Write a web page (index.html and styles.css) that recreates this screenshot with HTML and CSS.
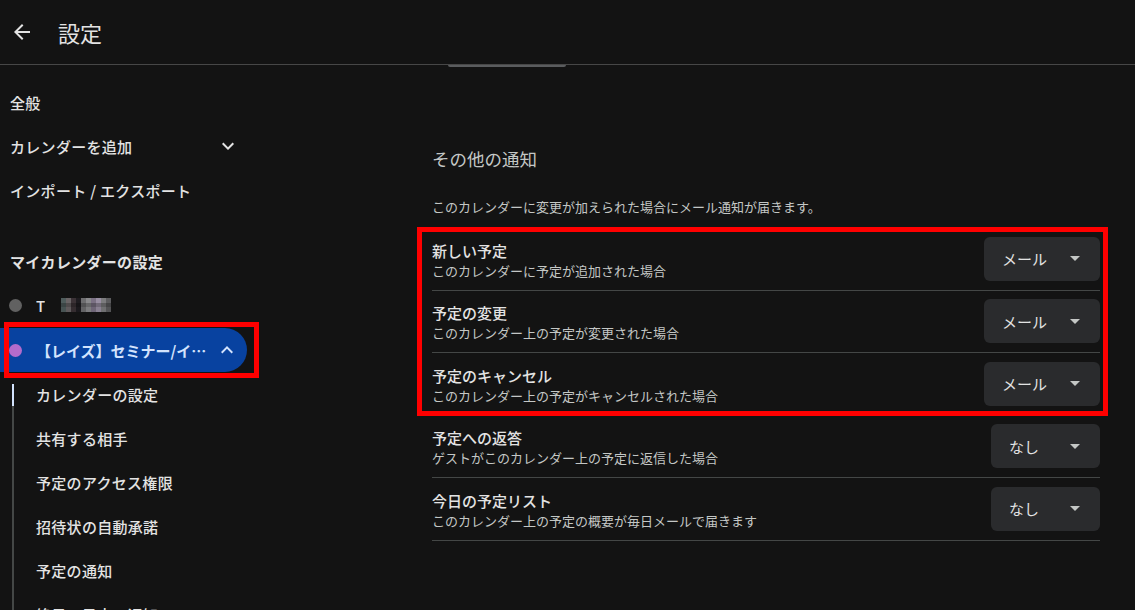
FILE: index.html
```html
<!DOCTYPE html>
<html lang="ja">
<head>
  <meta charset="UTF-8" />
  <meta name="viewport" content="width=device-width, initial-scale=1.0"/>
  <title>設定</title>
  <link rel="stylesheet" href="styles.css">
</head>
<body>

  <!-- Header -->
  <header class="topbar">
    <svg class="back" viewBox="0 0 24 24" width="24" height="24"><path fill="#e3e3e3" d="M20 11H7.83l5.59-5.59L12 4l-8 8 8 8 1.41-1.41L7.83 13H20v-2z"/></svg>
    <h1>設定</h1>
  </header>

  <div class="layout">
    <!-- Sidebar -->
    <aside class="sidebar">
      <a class="nav-item" href="#">全般</a>
      <a class="nav-item" href="#">カレンダーを追加
        <svg class="chev" viewBox="0 0 24 24" width="24" height="24"><path fill="#e3e3e3" d="M16.59 8.59L12 13.17 7.41 8.59 6 10l6 6 6-6z"/></svg>
      </a>
      <a class="nav-item" href="#">インポート / エクスポート</a>

      <div class="nav-heading">マイカレンダーの設定</div>

      <div class="cal-item">
        <span class="dot dot-gray"></span>
        <span class="cal-name">T</span>
        <span class="mosaic"></span>
      </div>

      <div class="cal-item active">
        <span class="dot dot-purple"></span>
        <span class="cal-name">【レイズ】セミナー/イベント</span>
        <svg class="chev" viewBox="0 0 24 24" width="24" height="24"><path fill="#d3e3fd" d="M12 8l-6 6 1.41 1.41L12 10.83l4.59 4.58L18 14z"/></svg>
      </div>

      <div class="sub-list">
        <a class="sub-item current" href="#">カレンダーの設定</a>
        <a class="sub-item" href="#">共有する相手</a>
        <a class="sub-item" href="#">予定のアクセス権限</a>
        <a class="sub-item" href="#">招待状の自動承諾</a>
        <a class="sub-item" href="#">予定の通知</a>
        <a class="sub-item" href="#">終日の予定の通知</a>
      </div>
    </aside>

    <!-- Main -->
    <main class="content">
      <div class="scroll-peek"></div>

      <h2 class="section-title">その他の通知</h2>
      <p class="section-desc">このカレンダーに変更が加えられた場合にメール通知が届きます。</p>

      <div class="rows">
        <div class="marked">
          <div class="row">
            <div class="row-text">
              <div class="row-title">新しい予定</div>
              <div class="row-sub">このカレンダーに予定が追加された場合</div>
            </div>
            <div class="select select-mail"><span>メール</span><i class="caret"></i></div>
          </div>
          <div class="row">
            <div class="row-text">
              <div class="row-title">予定の変更</div>
              <div class="row-sub">このカレンダー上の予定が変更された場合</div>
            </div>
            <div class="select select-mail"><span>メール</span><i class="caret"></i></div>
          </div>
          <div class="row">
            <div class="row-text">
              <div class="row-title">予定のキャンセル</div>
              <div class="row-sub">このカレンダー上の予定がキャンセルされた場合</div>
            </div>
            <div class="select select-mail"><span>メール</span><i class="caret"></i></div>
          </div>
        </div>

        <div class="row">
          <div class="row-text">
            <div class="row-title">予定への返答</div>
            <div class="row-sub">ゲストがこのカレンダー上の予定に返信した場合</div>
          </div>
          <div class="select select-none"><span>なし</span><i class="caret"></i></div>
        </div>
        <div class="row">
          <div class="row-text">
            <div class="row-title">今日の予定リスト</div>
            <div class="row-sub">このカレンダー上の予定の概要が毎日メールで届きます</div>
          </div>
          <div class="select select-none"><span>なし</span><i class="caret"></i></div>
        </div>
      </div>
    </main>
  </div>

</body>
</html>
```

FILE: styles.css
```css
* {
  box-sizing: border-box;
}

html, body {
  height: 100%;
}

body {
  margin: 0;
  font-family: "Noto Sans CJK JP", "Noto Sans", sans-serif;
  background: #131313;
  color: #e3e3e3;
  overflow: hidden;
}

a {
  color: inherit;
  text-decoration: none;
}

/* header */
.topbar {
  display: flex;
  align-items: center;
  height: 65px;
  padding-left: 10px;
  border-bottom: 1px solid #474747;
}

.topbar .back {
  display: block;
}

.topbar h1 {
  margin: 0 0 0 24px;
  font-size: 22px;
  font-weight: 400;
  line-height: 28px;
  color: #e3e3e3;
}

.layout {
  display: flex;
}

/* sidebar */
.sidebar {
  width: 256px;
  flex: none;
  padding-top: 15px;
}

.nav-item {
  display: flex;
  align-items: center;
  height: 44px;
  padding: 0 16px 0 10px;
  font-size: 15px;
  font-weight: 500;
  letter-spacing: 0.3px;
}

.nav-item .chev {
  margin-left: auto;
}

.nav-heading {
  display: flex;
  align-items: center;
  height: 44px;
  margin-top: 27px;
  padding-left: 10px;
  font-size: 15px;
  font-weight: 700;
  letter-spacing: 0.3px;
}

.cal-item {
  display: flex;
  align-items: center;
  height: 44px;
  padding: 0 8px 0 9px;
  font-size: 15px;
  font-weight: 500;
}

.dot {
  width: 13px;
  height: 13px;
  border-radius: 50%;
  flex: none;
  margin-right: 14px;
}

.dot-gray {
  background: #616161;
}

.dot-purple {
  background: #b36bcb;
}

.cal-name {
  white-space: nowrap;
  overflow: hidden;
  text-overflow: ellipsis;
}

.mosaic {
  width: 50px;
  height: 14px;
  margin-left: 16px;
  background:
    linear-gradient(180deg, rgba(0,0,0,0) 0 5px, rgba(0,0,0,0.25) 5px 9px, rgba(0,0,0,0.1) 9px),
    linear-gradient(90deg, #4f5c5c 0 5px, #6a6466 5px 10px, #3b3236 10px 15px, #1e1c20 15px 20px,
      #6e6e70 20px 25px, #8a8a8c 25px 30px, #7b7184 30px 35px, #988ea2 35px 40px,
      #7c7c7e 40px 45px, #5c5c5e 45px 50px);
}

.cal-item.active {
  position: relative;
  width: 247px;
  margin-top: 1px;
  background: #0842a0;
  color: #d3e3fd;
  font-weight: 700;
  border-radius: 0 22px 22px 0;
}

.cal-item.active .cal-name {
  width: 172px;
}

.cal-item.active .chev {
  margin-left: auto;
}

/* annotation box */
.cal-item.active::after {
  content: "";
  position: absolute;
  left: 4px;
  right: -12px;
  top: -6px;
  bottom: -6px;
  border: 5px solid #ff0000;
}

.sub-list {
  position: relative;
}

.sub-list::before {
  content: "";
  position: absolute;
  left: 12px;
  top: 12px;
  bottom: 0;
  width: 2px;
  background: #444746;
}

.sub-item {
  position: relative;
  display: flex;
  align-items: center;
  height: 44px;
  padding-left: 36px;
  font-size: 15px;
  font-weight: 500;
  letter-spacing: 0.3px;
}

.sub-item.current::before {
  content: "";
  position: absolute;
  left: 12px;
  top: 12px;
  width: 2px;
  height: 22px;
  background: #d3e3fd;
}

/* main */
.content {
  width: 844px;
  padding-left: 176px;
}

.scroll-peek {
  width: 118px;
  height: 2px;
  margin-left: 16px;
  background: #5a5c5e;
  border-radius: 0 0 6px 6px;
}

.section-title {
  margin: 80px 0 0;
  font-size: 17.5px;
  font-weight: 400;
  line-height: 24px;
  color: #c4c7c5;
}

.section-desc {
  margin: 26px 0 0;
  font-size: 13px;
  line-height: 20px;
  color: #c4c7c5;
}

.rows {
  margin-top: 11px;
}

.marked {
  position: relative;
}

.marked::after {
  content: "";
  position: absolute;
  left: -15px;
  right: -8px;
  top: -1px;
  bottom: 0;
  border: 5px solid #ff0000;
}

.row {
  display: flex;
  align-items: center;
  justify-content: space-between;
  height: 62.5px;
  border-bottom: 1px solid #444746;
}

.row-text {
  padding-top: 2px;
}

.row-title {
  font-size: 15px;
  font-weight: 500;
  line-height: 21px;
  color: #e3e3e3;
}

.row-sub {
  font-size: 13px;
  line-height: 19px;
  color: #c4c7c5;
}

.select {
  display: flex;
  align-items: center;
  justify-content: space-between;
  height: 44px;
  padding: 0 20px 0 18px;
  background: #2a2b2d;
  border-radius: 6px;
  font-size: 15px;
  color: #e3e3e3;
}

.select-mail {
  width: 116px;
}

.select-none {
  width: 109px;
}

.caret {
  width: 0;
  height: 0;
  border-left: 5px solid transparent;
  border-right: 5px solid transparent;
  border-top: 5px solid #c4c7c5;
}
```
